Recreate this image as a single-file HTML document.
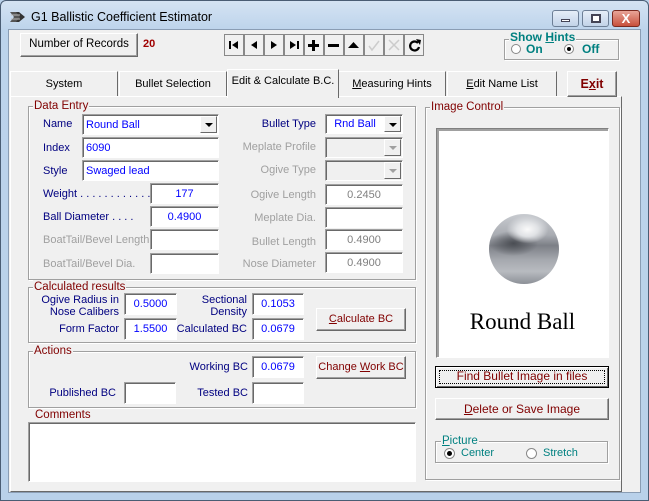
<!DOCTYPE html>
<html><head><meta charset="utf-8">
<style>
*{box-sizing:border-box}
body{margin:0;width:649px;height:501px;overflow:hidden;background:#b9d1ea;font-family:"Liberation Sans",sans-serif;font-size:11px;position:relative}
.a{position:absolute;white-space:nowrap}
#win{left:0;top:0;width:649px;height:501px;border:1px solid #4a5d74;border-radius:6px 6px 0 0;background:linear-gradient(#d4e3f3,#bcd3eb 30px,#b9d1ea)}
#client{left:8px;top:29px;width:633px;height:464px;background:#f0f0f0;border:1px solid #8a9db4}
.btn{position:absolute;white-space:nowrap;background:#f0f0f0;border:1px solid;border-color:#fff #696969 #696969 #fff;box-shadow:inset -1px -1px 0 #a0a0a0;text-align:center;color:#000}
.inp{position:absolute;white-space:nowrap;background:#fff;border:1px solid;border-color:#a0a0a0 #fff #fff #a0a0a0;box-shadow:inset 1px 1px 0 #696969;color:#0000ff;padding-left:3px;display:flex;align-items:center}
.c{justify-content:center;padding-left:0}
.dis{background:#f0f0f0}
.grp{position:absolute;border:1px solid #a0a0a0;box-shadow:1px 1px 0 #fff,inset 1px 1px 0 #fff}
.gt{position:absolute;white-space:nowrap;top:-8px;left:4px;background:#f0f0f0;color:#800000;padding:0 1px;line-height:14px;font-size:11.5px}
.lb{position:absolute;color:#000080;white-space:nowrap}
.gr{position:absolute;color:#a0a0a0;white-space:nowrap}
.dd{position:absolute;top:1px;right:1px;width:17px;bottom:1px;background:#f0f0f0;border:1px solid;border-color:#fff #696969 #696969 #fff}
.dd:after{content:"";position:absolute;left:4px;top:6px;border:4px solid transparent;border-top:4px solid #000;border-bottom:0}
.dd.g:after{border-top-color:#a0a0a0}
.tab{position:absolute;white-space:nowrap;top:71px;height:26px;border:1px solid;border-color:#fff #696969 transparent #fff;background:#f0f0f0;text-align:center;line-height:25px;color:#000}
</style></head><body>
<div id="win" class="a"></div>
<svg class="a" style="left:9px;top:9px" width="18" height="16" viewBox="0 0 18 16"><path d="M1 3h8l4 5-4 5H1l4-5z" fill="#555"/><path d="M7 3h3l6 5-6 5H7l4-5z" fill="#333"/><path d="M2 6h9M2 10h9" stroke="#bbb"/></svg>
<div class="a" style="left:31px;top:10px;font-size:12.5px;color:#000">G1 Ballistic Coefficient Estimator</div>
<div class="a" style="left:552px;top:10px;width:27px;height:17px;border:1px solid #6d7f96;border-radius:3px;background:linear-gradient(#e6eef8,#c2d3e8)"><div class="a" style="left:8px;top:8px;width:9px;height:3px;background:#fff;border:1px solid #445"></div></div>
<div class="a" style="left:582px;top:10px;width:27px;height:17px;border:1px solid #6d7f96;border-radius:3px;background:linear-gradient(#e6eef8,#c2d3e8)"><div class="a" style="left:8px;top:3px;width:10px;height:9px;border:2px solid #445;background:#fff"></div></div>
<div class="a" style="left:612px;top:10px;width:28px;height:17px;border:1px solid #7a2a20;border-radius:3px;background:linear-gradient(#e8a598,#c8503c);color:#fff;font-weight:bold;text-align:center;line-height:15px;font-size:13px">X</div>
<div id="client" class="a"></div>

<div class="btn" style="left:20px;top:33px;width:118px;height:24px;line-height:21px;font-size:11.5px">Number of Records</div>
<div class="a" style="left:143px;top:38px;color:#a00000;font-weight:bold">20</div>

<svg class="a" style="left:224px;top:34px" width="202" height="22">
<g fill="#f0f0f0" stroke="#888"><rect x="0.5" y="0.5" width="19" height="21"/><rect x="20.5" y="0.5" width="19" height="21"/><rect x="40.5" y="0.5" width="19" height="21"/><rect x="60.5" y="0.5" width="19" height="21"/><rect x="80.5" y="0.5" width="19" height="21"/><rect x="100.5" y="0.5" width="19" height="21"/><rect x="120.5" y="0.5" width="19" height="21"/><rect x="140.5" y="0.5" width="19" height="21"/><rect x="160.5" y="0.5" width="19" height="21"/><rect x="180.5" y="0.5" width="19" height="21"/></g>
<g fill="#000"><rect x="5" y="7" width="2" height="8"/><path d="M14 7v8l-6-4z"/><path d="M33 7v8l-6-4z"/><path d="M47 7v8l6-4z"/><path d="M66 7v8l6-4z"/><rect x="73" y="7" width="2" height="8"/><path d="M88 6h3v4h4v3h-4v4h-3v-4h-4v-3h4z"/><rect x="104" y="10" width="11" height="3"/><path d="M124 14h11l-5.5-6z"/></g>
<path d="M145 12l3 4 7-9" stroke="#ccc" fill="none" stroke-width="1.5"/><path d="M165 6l10 10M175 6l-10 10" stroke="#ccc" stroke-width="1.5"/>
<path d="M194 9a4.5 4.5 0 1 0 1 4" stroke="#000" stroke-width="2.2" fill="none"/><path d="M192 5l5 1-1 5z" fill="#000"/>
</svg>

<div class="grp" style="left:504px;top:39px;width:115px;height:21px"><div class="gt" style="color:#008080;font-weight:bold;font-size:12px;top:-10px">Show <u>H</u>ints</div>
<div class="a" style="left:6px;top:4px;width:10px;height:10px;border-radius:50%;border:1px solid #888;background:#fff"></div><div class="a" style="left:21px;top:2px;color:#008080;font-weight:bold;font-size:12px">On</div>
<div class="a" style="left:59px;top:4px;width:10px;height:10px;border-radius:50%;border:1px solid #888;background:#fff"><div class="a" style="left:2px;top:2px;width:4px;height:4px;border-radius:50%;background:#000"></div></div><div class="a" style="left:77px;top:2px;color:#008080;font-weight:bold;font-size:12px">Off</div></div>

<div class="tab" style="left:10px;width:108px">System</div>
<div class="tab" style="left:119px;width:108px">Bullet Selection</div>
<div class="tab" style="left:338px;width:108px"><u>M</u>easuring Hints</div>
<div class="tab" style="left:447px;width:110px"><u>E</u>dit Name List</div>
<div class="a" style="left:10px;top:96px;width:612px;height:396px;border:1px solid;border-color:#fff #696969 #696969 #fff;background:#f0f0f0"></div>
<div class="tab" style="left:227px;top:69px;height:29px;width:112px;line-height:22px;border-bottom:none">Edit &amp; Calculate B.C.</div>
<div class="btn" style="left:567px;top:71px;width:50px;height:26px;line-height:24px;color:#800000;font-weight:bold;font-size:12.5px">E<u>x</u>it</div>

<!-- Data Entry -->
<div class="grp" style="left:28px;top:106px;width:388px;height:174px"><div class="gt">Data Entry</div></div>
<div class="lb" style="left:43px;top:118px">Name</div>
<div class="inp" style="left:82px;top:114px;width:137px;height:21px">Round Ball<div class="dd"></div></div>
<div class="lb" style="left:43px;top:142px">Index</div>
<div class="inp" style="left:82px;top:137px;width:137px;height:21px">6090</div>
<div class="lb" style="left:43px;top:165px">Style</div>
<div class="inp" style="left:82px;top:160px;width:137px;height:21px">Swaged lead</div>
<div class="lb" style="left:43px;top:188px">Weight . . . . . . . . . . . .</div>
<div class="inp c" style="left:150px;top:183px;width:69px;height:21px">177</div>
<div class="lb" style="left:43px;top:211px">Ball Diameter . . . .</div>
<div class="inp c" style="left:150px;top:206px;width:69px;height:21px">0.4900</div>
<div class="gr" style="left:43px;top:234px">BoatTail/Bevel Length</div>
<div class="inp" style="left:150px;top:229px;width:69px;height:21px"></div>
<div class="gr" style="left:43px;top:258px">BoatTail/Bevel Dia.</div>
<div class="inp" style="left:150px;top:253px;width:69px;height:21px"></div>

<div class="lb" style="right:333px;top:118px">Bullet Type</div>
<div class="inp c" style="left:325px;top:114px;width:78px;height:20px;padding-right:18px">Rnd Ball<div class="dd"></div></div>
<div class="gr" style="right:333px;top:141px">Meplate Profile</div>
<div class="inp dis" style="left:325px;top:137px;width:78px;height:21px"><div class="dd g"></div></div>
<div class="gr" style="right:333px;top:164px">Ogive Type</div>
<div class="inp dis" style="left:325px;top:160px;width:78px;height:21px"><div class="dd g"></div></div>
<div class="gr" style="right:333px;top:189px">Ogive Length</div>
<div class="inp c" style="left:325px;top:184px;width:78px;height:21px;color:#808080">0.2450</div>
<div class="gr" style="right:333px;top:212px">Meplate Dia.</div>
<div class="inp" style="left:325px;top:207px;width:78px;height:21px"></div>
<div class="gr" style="right:333px;top:236px">Bullet Length</div>
<div class="inp c" style="left:325px;top:229px;width:78px;height:21px;color:#808080">0.4900</div>
<div class="gr" style="right:333px;top:258px">Nose Diameter</div>
<div class="inp c" style="left:325px;top:252px;width:78px;height:21px;color:#808080">0.4900</div>

<!-- Calculated -->
<div class="grp" style="left:28px;top:287px;width:388px;height:56px"><div class="gt">Calculated results</div></div>
<div class="lb" style="right:530px;top:294px;text-align:right;line-height:12px">Ogive Radius in<br>Nose Calibers</div>
<div class="inp c" style="left:124px;top:293px;width:53px;height:22px">0.5000</div>
<div class="lb" style="right:530px;top:323px">Form Factor</div>
<div class="inp c" style="left:124px;top:318px;width:53px;height:22px">1.5500</div>
<div class="lb" style="right:402px;top:294px;text-align:right;line-height:12px">Sectional<br>Density</div>
<div class="inp c" style="left:252px;top:293px;width:52px;height:22px">0.1053</div>
<div class="lb" style="right:402px;top:323px">Calculated BC</div>
<div class="inp c" style="left:252px;top:318px;width:52px;height:22px">0.0679</div>
<div class="btn" style="left:316px;top:308px;width:90px;height:23px;line-height:21px;color:#800000"><u>C</u>alculate BC</div>

<!-- Actions -->
<div class="grp" style="left:28px;top:351px;width:388px;height:57px"><div class="gt">Actions</div></div>
<div class="lb" style="right:401px;top:361px">Working BC</div>
<div class="inp c" style="left:252px;top:356px;width:52px;height:22px">0.0679</div>
<div class="btn" style="left:316px;top:356px;width:90px;height:23px;line-height:21px;color:#800000">Change <u>W</u>ork BC</div>
<div class="lb" style="right:533px;top:387px">Published BC</div>
<div class="inp" style="left:124px;top:382px;width:52px;height:22px"></div>
<div class="lb" style="right:401px;top:387px">Tested BC</div>
<div class="inp" style="left:252px;top:382px;width:52px;height:22px"></div>

<div class="a" style="left:35px;top:409px;color:#800000;font-size:11.5px">Comments</div>
<div class="inp" style="left:28px;top:422px;width:388px;height:60px"></div>

<!-- Image control -->
<div class="grp" style="left:425px;top:107px;width:195px;height:373px"><div class="gt">Image Control</div></div>
<div class="a" style="left:436px;top:128px;width:173px;height:230px;border:1px solid;border-color:#808080 #fff #fff #808080;box-shadow:inset 1px 1px 0 #a0a0a0,inset 2px 2px 0 #a0a0a0;background:#fff"></div>
<div class="a" style="left:489px;top:214px;width:70px;height:70px;border-radius:50%;background:radial-gradient(ellipse 30% 20% at 55% 22%,#fafafa 0,#e0e2e5 50%,rgba(200,203,208,0) 100%),radial-gradient(ellipse 35% 18% at 35% 42%,#4a4d53 0,rgba(90,93,99,0) 100%),linear-gradient(#c8cbd0 0%,#a9acb2 30%,#7c7f86 45%,#a5a8ae 65%,#b8bbc0 82%,#8c9097 100%)"></div>
<div class="a" style="left:436px;top:309px;width:173px;text-align:center;font-family:'Liberation Serif',serif;font-size:23px;color:#000">Round Ball</div>
<div class="btn" style="left:435px;top:366px;width:174px;height:22px;border:1px solid #000;box-shadow:inset 1px 1px 0 #fff,inset -1px -1px 0 #696969;line-height:19px;color:#800000;font-size:12px"><div class="a" style="left:3px;top:3px;right:3px;bottom:3px;border:1px dotted #000"></div>Find Bullet Image in files</div>
<div class="btn" style="left:435px;top:398px;width:174px;height:22px;line-height:20px;color:#800000;font-size:12px"><u>D</u>elete or Save Image</div>
<div class="grp" style="left:435px;top:441px;width:173px;height:22px"><div class="gt" style="color:#008080;left:5px"><u>P</u>icture</div>
<div class="a" style="left:8px;top:6px;width:11px;height:11px;border-radius:50%;border:1px solid #888;background:#fff"><div class="a" style="left:2px;top:2px;width:5px;height:5px;border-radius:50%;background:#000"></div></div><div class="a" style="left:25px;top:5px;color:#008080">Center</div>
<div class="a" style="left:90px;top:6px;width:11px;height:11px;border-radius:50%;border:1px solid #888;background:#fff"></div><div class="a" style="left:107px;top:5px;color:#008080">Stretch</div></div>
</body></html>
